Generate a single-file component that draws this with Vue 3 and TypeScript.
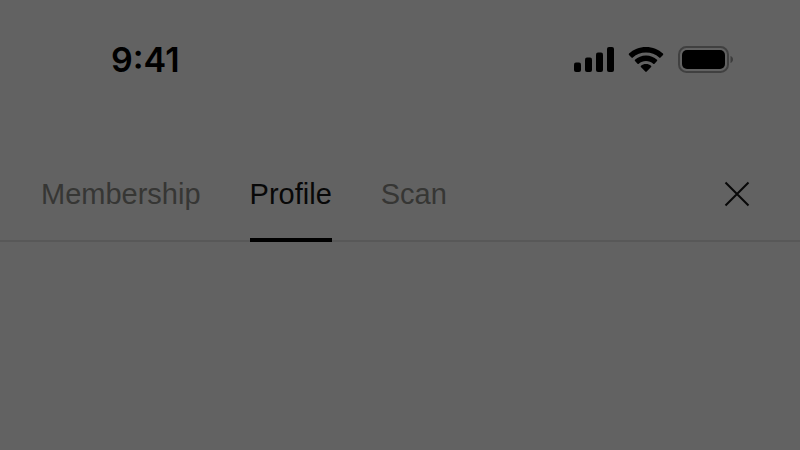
<script setup lang="ts">
import { ref } from 'vue'

const tabs: string[] = ['Membership', 'Profile', 'Scan']
const active = ref<string>('Profile')
</script>

<template>
  <div class="screen">
    <header class="status">
      <time class="clock">9:41</time>
      <div class="indicators">
        <svg class="signal" width="40" height="26" viewBox="0 0 40 26" aria-hidden="true">
          <rect x="0" y="15.5" width="7" height="9.5" rx="2" />
          <rect x="11" y="10.5" width="7" height="14.5" rx="2" />
          <rect x="22" y="5.5" width="7" height="19.5" rx="2" />
          <rect x="33" y="0" width="7" height="25" rx="2" />
        </svg>
        <svg class="wifi" width="36" height="26" viewBox="0 0 36 26" aria-hidden="true">
          <path d="M18 0C24.6 0 30.6 2.5 35 6.6C35.4 7 35.4 7.5 35 7.9L32.5 10.6C32.1 11 31.6 11 31.2 10.6C27.6 7.4 23 5.6 18 5.6S8.4 7.4 4.8 10.6C4.4 11 3.9 11 3.5 10.6L1 7.9C0.6 7.5 0.6 7 1 6.6C5.4 2.5 11.4 0 18 0Z" />
          <path d="M18 8.6C22.3 8.6 26.1 10.2 29 12.8C29.4 13.2 29.4 13.7 29 14.1L26.5 16.8C26.1 17.2 25.6 17.2 25.2 16.8C23.2 15.1 20.7 14.1 18 14.1S12.8 15.1 10.8 16.8C10.4 17.2 9.9 17.2 9.5 16.8L7 14.1C6.6 13.7 6.6 13.2 7 12.8C9.9 10.2 13.7 8.6 18 8.6Z" />
          <path d="M18 17.1C20 17.1 21.7 17.8 23 18.8C23.5 19.2 23.5 19.7 23.1 20.1L18.7 24.6C18.3 25 17.7 25 17.3 24.6L12.9 20.1C12.5 19.7 12.5 19.2 13 18.8C14.3 17.8 16 17.1 18 17.1Z" />
        </svg>
        <svg class="battery" width="56" height="28" viewBox="0 0 56 28" aria-hidden="true">
          <rect class="shell" x="1" y="1" width="49" height="25" rx="7.5" />
          <rect x="4" y="4" width="43" height="19" rx="5" />
          <path class="cap" d="M52.5 10C54 10.6 55 11.9 55 13.5S54 16.4 52.5 17Z" />
        </svg>
      </div>
    </header>

    <nav class="bar" aria-label="Account">
      <div class="tabs">
        <button
          v-for="tab in tabs"
          :key="tab"
          type="button"
          class="tab"
          :class="{ active: tab === active }"
          :aria-pressed="tab === active"
          @click="active = tab"
        >{{ tab }}</button>
      </div>
      <button type="button" class="close" aria-label="Close">
        <svg width="26" height="26" viewBox="0 0 26 26" aria-hidden="true">
          <path d="M1.5 1.5L24.5 24.5M24.5 1.5L1.5 24.5" />
        </svg>
      </button>
    </nav>
  </div>
</template>

<style>
body {
  margin: 0;
  background: #626262;
}
</style>

<style scoped>
.screen {
  min-height: 100vh;
  background: #626262;
  color: #000;
  font-family: "Liberation Sans", Arial, sans-serif;
}

.status {
  display: flex;
  justify-content: space-between;
  align-items: center;
  padding: 40px 66px 0 111px;
}

.clock {
  font-family: Inter, sans-serif;
  font-size: 34px;
  font-weight: 600;
  line-height: 40px;
}

.indicators {
  display: flex;
  align-items: center;
  gap: 14px;
}

.battery .shell {
  fill: none;
  stroke: #404040;
  stroke-width: 2;
}

.battery .cap {
  fill: #3c3c3c;
}

.bar {
  display: flex;
  justify-content: space-between;
  align-items: flex-start;
  margin-top: 89px;
  padding: 0 50px 0 41px;
  border-bottom: 2px solid #585858;
}

.tabs {
  display: flex;
  gap: 49px;
  margin-bottom: -2px;
}

.tab {
  padding: 8px 0 27px;
  border: 0;
  border-bottom: 4px solid transparent;
  background: none;
  color: #363634;
  font-family: inherit;
  font-size: 29px;
  line-height: 34px;
  cursor: pointer;
}

.tab.active {
  border-bottom-color: #000;
  color: #080808;
}

.close {
  display: flex;
  padding: 12px 0;
  border: 0;
  background: none;
  cursor: pointer;
}

.close path {
  fill: none;
  stroke: #080808;
  stroke-width: 2;
}
</style>
